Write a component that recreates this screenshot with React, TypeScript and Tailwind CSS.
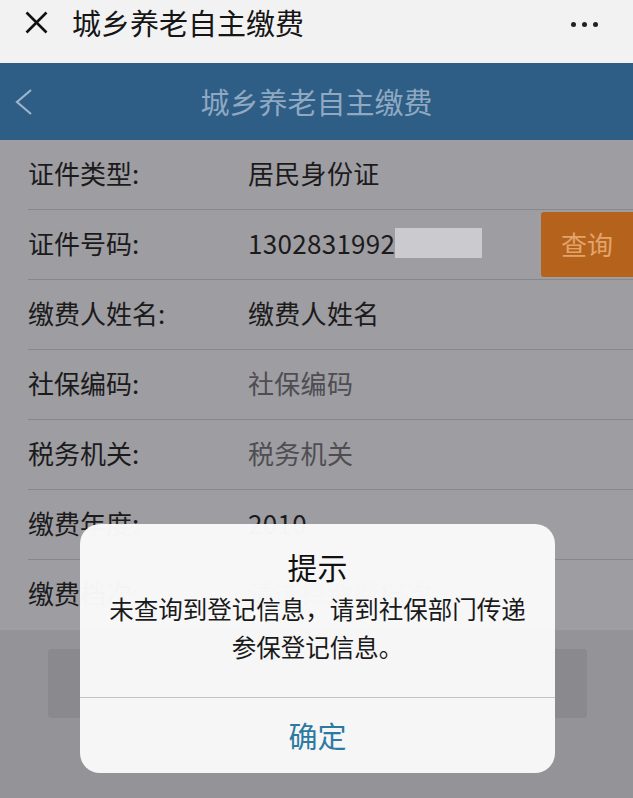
import React from 'react';

const rows: { label: string; value: string; muted?: boolean }[] = [
  { label: '证件类型:', value: '居民身份证' },
  { label: '证件号码:', value: '1302831992' },
  { label: '缴费人姓名:', value: '缴费人姓名' },
  { label: '社保编码:', value: '社保编码', muted: true },
  { label: '税务机关:', value: '税务机关', muted: true },
  { label: '缴费年度:', value: '2010' },
  { label: '缴费档次:', value: '请选择缴费档次', muted: true },
];

const FormRow: React.FC<{ label: string; value: string; muted?: boolean; index: number }> = ({
  label,
  value,
  muted,
  index,
}) => {
  const last = index === rows.length - 1;
  return (
    <div className={`ml-[28px] flex h-[70px] items-center ${last ? '' : 'border-b border-[#88878c]'}`}>
      <span className="w-[220px] pb-[5px] text-[26px] text-[#1b1b1c]">{label}</span>
      <span className={`pb-[5px] text-[26px] tracking-[0.3px] ${muted ? 'text-[#4e4d52]' : 'text-[#1b1b1c]'}`}>
        {value}
      </span>
      {index === 1 && (
        <>
          <span className="mb-[3px] h-[30px] w-[87px] bg-[#cbcacf]" />
          <div className="flex-1" />
          <button className="flex h-[65px] w-[92px] items-center justify-center self-center rounded-l-[3px] bg-[#b5631c] pb-[3px] text-[26px] text-[#e3a46c]">
            查询
          </button>
        </>
      )}
    </div>
  );
};

export default function App() {
  return (
    <div className="relative h-[798px] w-[633px] overflow-hidden bg-[#949398] font-['Noto_Sans_CJK_SC',sans-serif]">
      {/* wechat bar */}
      <div className="h-[63px] bg-[#f2f2f2]">
        <div className="flex h-[44px] items-center">
          <svg className="ml-[25px]" width="23" height="23" viewBox="0 0 23 23">
            <path d="M1.5 1.5 L21.5 21.5 M21.5 1.5 L1.5 21.5" stroke="#111" strokeWidth="2.6" />
          </svg>
          <span className="ml-[24px] text-[29px] leading-none text-[#151515]">城乡养老自主缴费</span>
          <div className="ml-auto mr-[35px] flex gap-[6px] pt-[4px]">
            <span className="h-[5px] w-[5px] rounded-full bg-[#222]" />
            <span className="h-[5px] w-[5px] rounded-full bg-[#222]" />
            <span className="h-[5px] w-[5px] rounded-full bg-[#222]" />
          </div>
        </div>
      </div>

      {/* app header */}
      <div className="flex h-[77px] items-center bg-[#2e5d85]">
        <div className="flex w-[60px] items-center pl-[14px]">
          <svg width="20" height="28" viewBox="0 0 20 28">
            <path d="M17 2 L3 14 L17 26" fill="none" stroke="#9db5cc" strokeWidth="2.2" />
          </svg>
        </div>
        <div className="flex-1 text-center text-[29px] text-[#8ea9c1]">城乡养老自主缴费</div>
        <div className="w-[60px]" />
      </div>

      {/* form */}
      <div className="bg-[#9e9da2]">
        {rows.map((r, i) => (
          <FormRow key={r.label} {...r} index={i} />
        ))}
      </div>

      <div className="px-[48px] pt-[19px]">
        <div className="h-[69px] w-[539px] rounded-[4px] bg-[#8a898e]" />
      </div>

      {/* alert */}
      <div className="absolute left-[80px] top-[524px] flex h-[249px] w-[475px] flex-col rounded-[20px] bg-[#f8f8f9]/[0.985]">
        <div className="flex flex-1 flex-col items-center pt-[22px]">
          <div className="text-[30px] leading-[40px] text-[#111]">提示</div>
          <div className="mt-[4px] px-[24px] text-center text-[24.5px] leading-[38px] text-[#1a1a1a]">
            未查询到登记信息，请到社保部门传递
            <br />
            参保登记信息。
          </div>
        </div>
        <div className="flex h-[76px] items-center justify-center border-t border-[#c4c4c8] text-[29px] text-[#2b7aa2]">
          确定
        </div>
      </div>
    </div>
  );
}
